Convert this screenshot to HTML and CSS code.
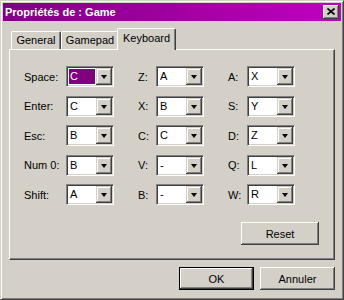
FILE: index.html
```html
<!DOCTYPE html>
<html lang="fr">
<head>
  <meta charset="UTF-8">
  <title>Propriétés de : Game</title>
  <link rel="stylesheet" href="styles.css">
</head>
<body>
  <div class="window">
    <div class="titlebar">
      <span class="title">Propriétés de : Game</span>
      <span class="close">
        <svg width="8" height="7" viewBox="0 0 8 7"><path d="M0.5 0.5L7.5 6.5M7.5 0.5L0.5 6.5" stroke="#000" stroke-width="1.6"/></svg>
      </span>
    </div>
    <div class="content">
      <div class="tabs">
        <div class="tab tab-general">General</div>
        <div class="tab tab-gamepad">Gamepad</div>
        <div class="tab tab-keyboard active">Keyboard</div>
      </div>
      <div class="panel">
        <div class="keys">
          <label>Space:</label><div class="cell"><div class="combo"><span class="val focus">C</span><span class="drop"><i></i></span></div></div>
          <label>Z:</label><div class="cell"><div class="combo"><span class="val">A</span><span class="drop"><i></i></span></div></div>
          <label>A:</label><div class="cell"><div class="combo"><span class="val">X</span><span class="drop"><i></i></span></div></div>

          <label>Enter:</label><div class="cell"><div class="combo"><span class="val">C</span><span class="drop"><i></i></span></div></div>
          <label>X:</label><div class="cell"><div class="combo"><span class="val">B</span><span class="drop"><i></i></span></div></div>
          <label>S:</label><div class="cell"><div class="combo"><span class="val">Y</span><span class="drop"><i></i></span></div></div>

          <label>Esc:</label><div class="cell"><div class="combo"><span class="val">B</span><span class="drop"><i></i></span></div></div>
          <label>C:</label><div class="cell"><div class="combo"><span class="val">C</span><span class="drop"><i></i></span></div></div>
          <label>D:</label><div class="cell"><div class="combo"><span class="val">Z</span><span class="drop"><i></i></span></div></div>

          <label>Num 0:</label><div class="cell"><div class="combo"><span class="val">B</span><span class="drop"><i></i></span></div></div>
          <label>V:</label><div class="cell"><div class="combo"><span class="val">-</span><span class="drop"><i></i></span></div></div>
          <label>Q:</label><div class="cell"><div class="combo"><span class="val">L</span><span class="drop"><i></i></span></div></div>

          <label>Shift:</label><div class="cell"><div class="combo"><span class="val">A</span><span class="drop"><i></i></span></div></div>
          <label>B:</label><div class="cell"><div class="combo"><span class="val">-</span><span class="drop"><i></i></span></div></div>
          <label>W:</label><div class="cell"><div class="combo"><span class="val">R</span><span class="drop"><i></i></span></div></div>
        </div>
        <button class="btn reset">Reset</button>
      </div>
      <div class="actions">
        <button class="btn default">OK</button>
        <button class="btn">Annuler</button>
      </div>
    </div>
  </div>
</body>
</html>
```

FILE: styles.css
```css
body{margin:0;background:#d4d0c8;font-family:"Liberation Sans",Arial,sans-serif;font-size:11px;color:#000}
.window{width:344px;height:300px;box-sizing:border-box;background:#d4d0c8;padding:2px;
  border:1px solid;border-color:#d4d0c8 #404040 #404040 #d4d0c8;
  box-shadow:inset 1px 1px #fff,inset -1px -1px #808080}

/* barre de titre */
.titlebar{height:18px;display:flex;align-items:center;justify-content:space-between;
  padding:0 2px 0 2px;background:linear-gradient(to right,#800080,#c000c0)}
.title{color:#fff;font-weight:bold;font-size:11px}
.close{width:16px;height:14px;box-sizing:border-box;background:#d4d0c8;display:flex;
  align-items:center;justify-content:center;padding:0 1px 1px 0;
  box-shadow:inset -1px -1px #404040,inset 1px 1px #fff,inset -2px -2px #808080}
.close svg{display:block}

.content{padding:7px 6px 0 6px}

/* onglets */
.tabs{display:flex;align-items:flex-end;height:21px;padding-left:2px;position:relative;z-index:1}
.tab{height:18px;box-sizing:border-box;line-height:17px;text-align:center;background:#d4d0c8;
  border-top:1px solid #fff;border-left:1px solid #fff;border-right:1px solid #404040;
  border-radius:2px 2px 0 0;box-shadow:inset -1px 0 #808080}
.tab-general{width:50px}
.tab-gamepad{width:58px}
.tab-keyboard{width:59px}
.tab.active{height:22px;margin:0 0 -1px -2px;line-height:19px;position:relative}

.panel{height:211px;box-sizing:border-box;border:1px solid;border-color:#fff #404040 #404040 #fff;
  box-shadow:inset -1px -1px #808080;padding:16px 15px 0 14px;display:flex;flex-direction:column}
.keys{display:grid;grid-template-columns:42px 72px 18px 72px 19px 48px;grid-auto-rows:21px;row-gap:8.5px;align-items:center}
.keys label{white-space:nowrap}

/* liste déroulante */
.combo{width:48px;height:21px;box-sizing:border-box;background:#fff;display:flex;padding:1px;
  border:1px solid;border-color:#808080 #fff #fff #808080;
  box-shadow:inset 1px 1px #404040,inset -1px -1px #d4d0c8}
.val{flex:1;padding-left:2px;line-height:17px}
.val.focus{margin:1px 1px 1px 1px;padding-left:1px;line-height:15px;background:#800080;color:#fff}
.drop{width:16px;height:17px;box-sizing:border-box;background:#d4d0c8;display:flex;align-items:center;justify-content:center;
  box-shadow:inset -1px -1px #404040,inset 1px 1px #d4d0c8,inset -2px -2px #808080,inset 2px 2px #fff}
.drop i{width:0;height:0;border-left:3.5px solid transparent;border-right:3.5px solid transparent;border-top:4px solid #000;margin-top:1px}

/* boutons */
.btn{width:75px;height:23px;box-sizing:border-box;background:#d4d0c8;border:none;padding:0;
  font-family:inherit;font-size:11px;color:#000;
  box-shadow:inset -1px -1px #404040,inset 1px 1px #fff,inset -2px -2px #808080,inset 2px 2px #d4d0c8}
.reset{width:78px;align-self:flex-end;margin-top:17px}
.btn.default{border:1px solid #000;box-shadow:inset -1px -1px #404040,inset 1px 1px #fff,inset -2px -2px #808080}
.actions{display:flex;justify-content:flex-end;gap:6px;margin-top:7px}
```
